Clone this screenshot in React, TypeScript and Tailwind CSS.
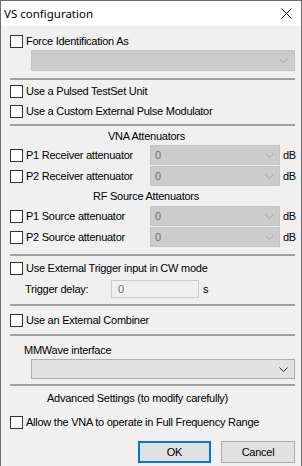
import React from "react";

const Box = () => (
  <span className="w-[13px] h-[13px] shrink-0 border border-[#333333] bg-white" />
);

const Check = ({ label }: { label: string }) => (
  <div className="flex items-center h-[18px] pl-[9px]">
    <Box />
    <span className="ml-[3px] whitespace-nowrap">{label}</span>
  </div>
);

const Chevron = ({ color }: { color: string }) => (
  <svg width="9" height="5" viewBox="0 0 9 5" className="shrink-0">
    <path d="M0.5 0.5 L4.5 4.5 L8.5 0.5" fill="none" stroke={color} strokeWidth="1" />
  </svg>
);

const Sep = ({ mt }: { mt: string }) => (
  <div className={`${mt} ml-[9px] w-[285px] h-[2px] bg-[#a0a0a0]`} />
);

const AttRow = ({ label, mt }: { label: string; mt: string }) => (
  <div className={`${mt} flex items-center h-[20px]`}>
    <div className="flex items-center pl-[9px] w-[149px]">
      <Box />
      <span className="ml-[3px] whitespace-nowrap">{label}</span>
    </div>
    <div className="w-[130px] h-[20px] flex items-center justify-between bg-[#cccccc] border border-[#c4c4c4] pl-[4px] pr-[5px] text-[#6d6d6d]">
      <span>0</span>
      <Chevron color="#a8a8a8" />
    </div>
    <span className="ml-[3px]">dB</span>
  </div>
);

export default function App() {
  return (
    <div
      className="w-[302px] h-[466px] bg-[#f0f0f0] border-x border-t border-[#6e6e6e] flex flex-col text-[11px] tracking-[-0.25px] text-black overflow-hidden"
      style={{ fontFamily: '"Liberation Sans", Arial, sans-serif' }}
    >
      <div className="h-[25px] shrink-0 bg-white flex items-center justify-between pl-[3px] pr-[9px]">
        <span className="text-[11.5px] tracking-normal" style={{ fontFamily: '"Noto Sans", sans-serif' }}>
          VS configuration
        </span>
        <svg width="11" height="11" viewBox="0 0 11 11">
          <path d="M0.5 0.5 L10.5 10.5 M10.5 0.5 L0.5 10.5" stroke="#000" strokeWidth="1" />
        </svg>
      </div>

      <div className="mt-[6px]">
        <Check label="Force Identification As" />
      </div>
      <div className="ml-[30px] w-[264px] h-[21px] flex items-center justify-end bg-[#cccccc] border border-[#c4c4c4] pr-[6px]">
        <Chevron color="#a8a8a8" />
      </div>

      <Sep mt="mt-[7px]" />
      <div className="mt-[2px]">
        <Check label="Use a Pulsed TestSet Unit" />
      </div>
      <div className="mt-[2px]">
        <Check label="Use a Custom External Pulse Modulator" />
      </div>
      <Sep mt="mt-[4px]" />

      <div className="mt-[1px] h-[18px] flex items-center pl-[107px]">VNA Attenuators</div>
      <AttRow label="P1 Receiver attenuator" mt="mt-0" />
      <AttRow label="P2 Receiver attenuator" mt="mt-[1px]" />
      <div className="mt-[1px] h-[18px] flex items-center pl-[92px]">RF Source Attenuators</div>
      <AttRow label="P1 Source attenuator" mt="mt-[1px]" />
      <AttRow label="P2 Source attenuator" mt="mt-[1px]" />

      <Sep mt="mt-[7px]" />
      <div className="mt-[3px]">
        <Check label="Use External Trigger input in CW mode" />
      </div>
      <div className="mt-[3px] h-[18px] flex items-center pl-[24px]">
        <span className="w-[86px]">Trigger delay:</span>
        <div className="w-[88px] h-[18px] flex items-center bg-[#f0f0f0] border border-[#cccccc] pl-[6px] text-[#6d6d6d]">
          0
        </div>
        <span className="ml-[4px]">s</span>
      </div>

      <Sep mt="mt-[6px]" />
      <div className="mt-[5px]">
        <Check label="Use an External Combiner" />
      </div>
      <Sep mt="mt-[5px]" />

      <div className="mt-[5px] h-[18px] flex items-center pl-[23px]">MMWave interface</div>
      <div className="ml-[30px] w-[264px] h-[20px] flex items-center justify-end bg-[#e1e1e1] border border-[#adadad] pr-[6px]">
        <Chevron color="#333333" />
      </div>

      <Sep mt="mt-[5px]" />
      <div className="mt-[3px] h-[18px] flex items-center pl-[46px]">
        Advanced Settings (to modify carefully)
      </div>
      <div className="mt-[6px]">
        <Check label="Allow the VNA to operate in Full Frequency Range" />
      </div>

      <div className="mt-[10px] flex gap-[10px] pl-[137px]">
        <button className="w-[73px] h-[22px] bg-[#e1e1e1] border-2 border-[#0078d7] text-[11px]">
          OK
        </button>
        <button className="w-[74px] h-[22px] bg-[#e1e1e1] border border-[#adadad] text-[11px]">
          Cancel
        </button>
      </div>
    </div>
  );
}
